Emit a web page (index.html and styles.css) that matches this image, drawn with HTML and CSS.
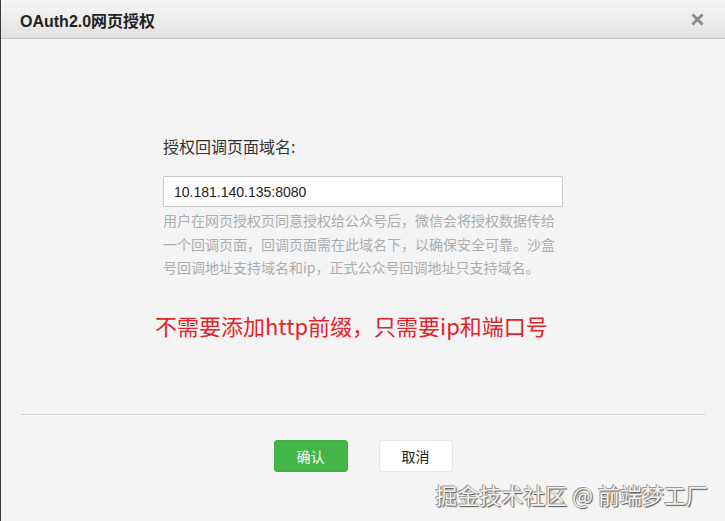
FILE: index.html
```html
<!DOCTYPE html>
<html lang="zh-CN">
<head>
<meta charset="utf-8">
<title>OAuth2.0网页授权</title>
<link rel="stylesheet" href="styles.css">
</head>
<body>
<div class="dialog">
  <div class="dialog-head">
    <h3 class="dialog-title">OAuth2.0网页授权</h3>
    <button class="dialog-close" aria-label="关闭">
      <svg width="13" height="13" viewBox="0 0 13 13"><path d="M1.5 1.5L11.5 11.5M11.5 1.5L1.5 11.5" stroke="#8c8c8c" stroke-width="3" stroke-linecap="butt"/></svg>
    </button>
  </div>
  <div class="dialog-body">
    <div class="form-item">
      <label class="form-label">授权回调页面域名:</label>
      <input class="form-input" type="text" value="10.181.140.135:8080">
      <p class="form-tips">用户在网页授权页同意授权给公众号后，微信会将授权数据传给一个回调页面，回调页面需在此域名下，以确保安全可靠。沙盒号回调地址支持域名和ip，正式公众号回调地址只支持域名。</p>
    </div>
    <p class="note">不需要添加http前缀，只需要ip和端口号</p>
  </div>
  <div class="dialog-foot">
    <button class="btn btn-primary">确认</button>
    <button class="btn btn-default">取消</button>
  </div>
  <div class="watermark">掘金技术社区 @ 前端梦工厂</div>
</div>
</body>
</html>
```
FILE: styles.css
```css
* { box-sizing: border-box; }
html, body {
  margin: 0;
  padding: 0;
  height: 100%;
}
body {
  font-family: "Liberation Sans", "Noto Sans CJK SC", sans-serif;
  background: #f4f4f4;
  color: #222;
}
.dialog {
  position: relative;
  height: 521px;
  border-left: 1px solid #3a3a3a;
  background: #f4f4f4;
  display: flex;
  flex-direction: column;
}
.dialog-head {
  height: 39px;
  display: flex;
  align-items: center;
  justify-content: space-between;
  padding: 0 21px 0 19px;
  background: linear-gradient(#f6f6f6, #e2e2e2);
  border-bottom: 1px solid #c4c4c4;
}
.dialog-title {
  margin: 0;
  font-size: 16px;
  font-weight: bold;
  color: #222;
  padding-top: 1px;
}
.dialog-close {
  border: 0;
  background: none;
  padding: 0;
  width: 13px;
  height: 13px;
  display: flex;
  margin-top: 1px;
}
.dialog-body {
  padding: 95px 0 0 162px;
  height: 375px;
}
.form-item {
  width: 400px;
}
.form-label {
  display: block;
  font-family: "Noto Sans CJK SC", sans-serif;
  font-size: 16px;
  line-height: 24px;
  color: #333;
}
.form-input {
  display: block;
  width: 400px;
  height: 31px;
  margin-top: 18px;
  padding: 0 10px;
  border: 1px solid #c9c9c9;
  border-radius: 2px;
  background: #fff;
  font-family: "Liberation Sans", sans-serif;
  font-size: 14px;
  color: #222;
}
.form-tips {
  margin: 2px 0 0;
  font-family: "Noto Sans CJK SC", sans-serif;
  font-size: 14px;
  line-height: 23.5px;
  color: #adadad;
}
.note {
  margin: 29px 0 0 -8px;
  font-family: "Noto Sans CJK SC", sans-serif;
  font-size: 22px;
  line-height: 32px;
  color: #e4232a;
}
.dialog-foot {
  margin: 0 20px;
  border-top: 1px solid #d2d2d2;
  padding-top: 25px;
  display: flex;
  justify-content: center;
  gap: 31px;
}
.btn {
  width: 74px;
  height: 32px;
  border-radius: 3px;
  font-family: "Noto Sans CJK SC", sans-serif;
  font-size: 14px;
  cursor: pointer;
}
.btn-primary {
  background: #44b549;
  border: 1px solid #3fae44;
  color: #fff;
}
.btn-default {
  background: #fff;
  border: 1px solid #e4e4e4;
  color: #222;
}
.watermark {
  position: absolute;
  right: 17px;
  bottom: 13px;
  font-family: "Noto Sans CJK SC", sans-serif;
  font-size: 22px;
  line-height: 28px;
  color: #f2f2f2;
  text-shadow: -1px -1px 0 #9a9a9a, 1px 1px 1px #555, 0 0 1px #666;
  white-space: nowrap;
}
```
